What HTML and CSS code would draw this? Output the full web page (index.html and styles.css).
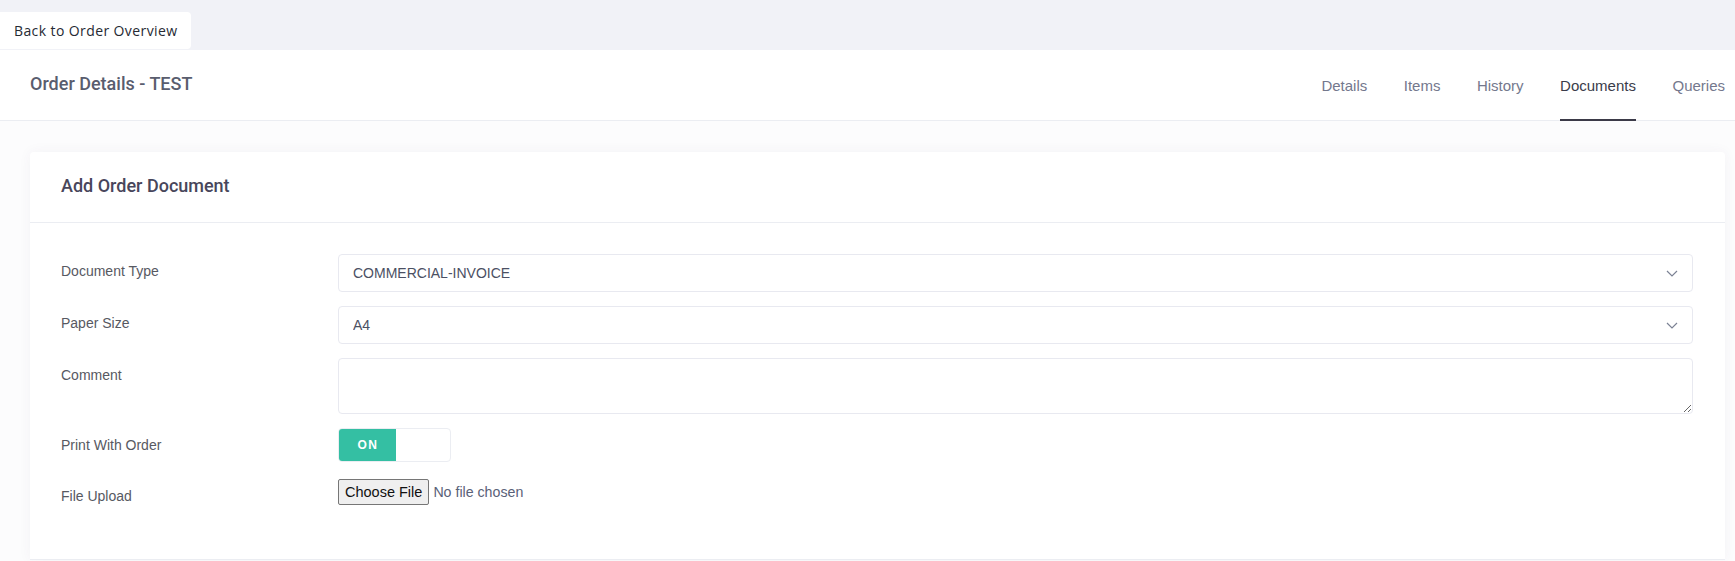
FILE: index.html
```html
<!DOCTYPE html>
<html lang="en">
<head>
<meta charset="utf-8">
<title>Order Details - TEST</title>
<link rel="stylesheet" href="styles.css">
</head>
<body>
<div class="topbar">
  <a class="back-tab" href="#">Back to Order Overview</a>
</div>
<header class="subheader">
  <h1 class="subheader-title">Order Details - TEST</h1>
  <nav class="tabs">
    <a class="tab" href="#">Details</a>
    <a class="tab" href="#">Items</a>
    <a class="tab" href="#">History</a>
    <a class="tab active" href="#">Documents</a>
    <a class="tab" href="#">Queries</a>
  </nav>
</header>
<main class="content">
  <section class="card">
    <div class="card-head">
      <h2 class="card-title">Add Order Document</h2>
    </div>
    <form class="card-body">
      <div class="form-row">
        <label class="form-label">Document Type</label>
        <div class="select-wrap">
          <select class="form-select">
            <option>COMMERCIAL-INVOICE</option>
          </select>
          <svg class="chevron" width="12" height="7" viewBox="0 0 12 7"><path d="M1 1l5 5 5-5" fill="none" stroke="#7b8294" stroke-width="1.2"/></svg>
        </div>
      </div>
      <div class="form-row">
        <label class="form-label">Paper Size</label>
        <div class="select-wrap">
          <select class="form-select">
            <option>A4</option>
          </select>
          <svg class="chevron" width="12" height="7" viewBox="0 0 12 7"><path d="M1 1l5 5 5-5" fill="none" stroke="#7b8294" stroke-width="1.2"/></svg>
        </div>
      </div>
      <div class="form-row">
        <label class="form-label">Comment</label>
        <textarea class="form-textarea"></textarea>
      </div>
      <div class="form-row">
        <label class="form-label">Print With Order</label>
        <div class="switch">
          <span class="switch-on">ON</span>
          <span class="switch-handle"></span>
        </div>
      </div>
      <div class="form-row file-row">
        <label class="form-label">File Upload</label>
        <input class="file-input" type="file">
      </div>
    </form>
  </section>
</main>
</body>
</html>
```

FILE: styles.css
```css
* { box-sizing: border-box; }

html, body {
  margin: 0;
  padding: 0;
}

body {
  background: #fcfcfd;
  font-family: "Liberation Sans", Arial, sans-serif;
  color: #575962;
  width: 1735px;
  min-height: 561px;
}

.topbar {
  background: #f1f2f7;
  height: 50px;
  padding-top: 12px;
  display: flex;
  align-items: flex-start;
}

.back-tab {
  display: flex;
  align-items: center;
  height: 37px;
  width: 191px;
  padding-left: 14px;
  background: #ffffff;
  border-radius: 0 4px 4px 0;
  font-family: "Open Sans", sans-serif;
  font-size: 14px;
  letter-spacing: 0.4px;
  color: #262a33;
  text-decoration: none;
}

.subheader {
  background: #ffffff;
  height: 71px;
  border-bottom: 1px solid #ebedf2;
  display: flex;
  align-items: center;
  justify-content: space-between;
  padding: 0 10px 0 30px;
}

.subheader-title {
  margin: 0 0 3px 0;
  font-family: Roboto, sans-serif;
  font-weight: 500;
  font-size: 18px;
  color: #595d6e;
}

.tabs {
  display: flex;
  align-self: stretch;
  gap: 36.5px;
}

.tab {
  display: flex;
  align-items: center;
  padding-top: 1px;
  margin-bottom: -1px;
  border-bottom: 2px solid transparent;
  font-size: 15px;
  color: #74788d;
  text-decoration: none;
}

.tab.active {
  color: #3a3c4a;
  border-bottom-color: #3b3a48;
}

.content {
  padding: 31px 10px 0 30px;
}

.card {
  background: #ffffff;
  border-radius: 4px 4px 0 0;
  box-shadow: 0 0 13px 0 rgba(82, 63, 105, 0.05);
  border-bottom: 1px solid #ebedf2;
}

.card-head {
  height: 71px;
  border-bottom: 1px solid #ebedf2;
  display: flex;
  align-items: center;
  padding: 0 31px;
}

.card-title {
  margin: 0 0 4px 0;
  font-family: Roboto, sans-serif;
  font-weight: 500;
  font-size: 18px;
  color: #48465b;
}

.card-body {
  padding: 31px 32px 54px 31px;
  display: flex;
  flex-direction: column;
  gap: 14px;
}

.form-row {
  display: grid;
  grid-template-columns: 277px 1fr;
  align-items: start;
}

.file-row {
  padding-top: 3px;
}

.form-label {
  padding-top: 8px;
  line-height: 18px;
  font-size: 14px;
  color: #575962;
}

.select-wrap {
  position: relative;
}

.form-select {
  display: block;
  width: 100%;
  height: 38px;
  padding: 0 40px 0 14px;
  border: 1px solid #e8e9f0;
  border-radius: 4px;
  background: #ffffff;
  appearance: none;
  -webkit-appearance: none;
  font-family: "Liberation Sans", Arial, sans-serif;
  font-size: 14px;
  color: #4b5063;
  outline: none;
}

.chevron {
  position: absolute;
  right: 15px;
  top: 16px;
  pointer-events: none;
}

.form-textarea {
  display: block;
  width: 100%;
  height: 56px;
  border: 1px solid #e8e9f0;
  border-radius: 4px;
  padding: 8px 16px;
  font-family: "Liberation Sans", Arial, sans-serif;
  font-size: 14px;
  resize: vertical;
  outline: none;
}

.switch {
  display: flex;
  width: 113px;
  height: 34px;
  border: 1px solid #ebedf2;
  border-radius: 4px;
  overflow: hidden;
  background: #ffffff;
}

.switch-on {
  width: 57px;
  display: flex;
  align-items: center;
  justify-content: center;
  background: #34bfa3;
  color: #ffffff;
  font-weight: 700;
  font-size: 12px;
  letter-spacing: 1.5px;
  padding-left: 1px;
}

.switch-handle {
  flex: 1;
}

.file-input {
  font-family: "Liberation Sans", Arial, sans-serif;
  font-size: 14.2px;
  color: #5a6178;
  height: 26px;
}

.file-input::file-selector-button {
  height: 26px;
  padding: 0 6px;
  margin-right: 4px;
  border: 1px solid #767676;
  border-radius: 2px;
  background: #efefef;
  color: #111111;
  font-family: "Liberation Sans", Arial, sans-serif;
  font-size: 14.5px;
}
```
